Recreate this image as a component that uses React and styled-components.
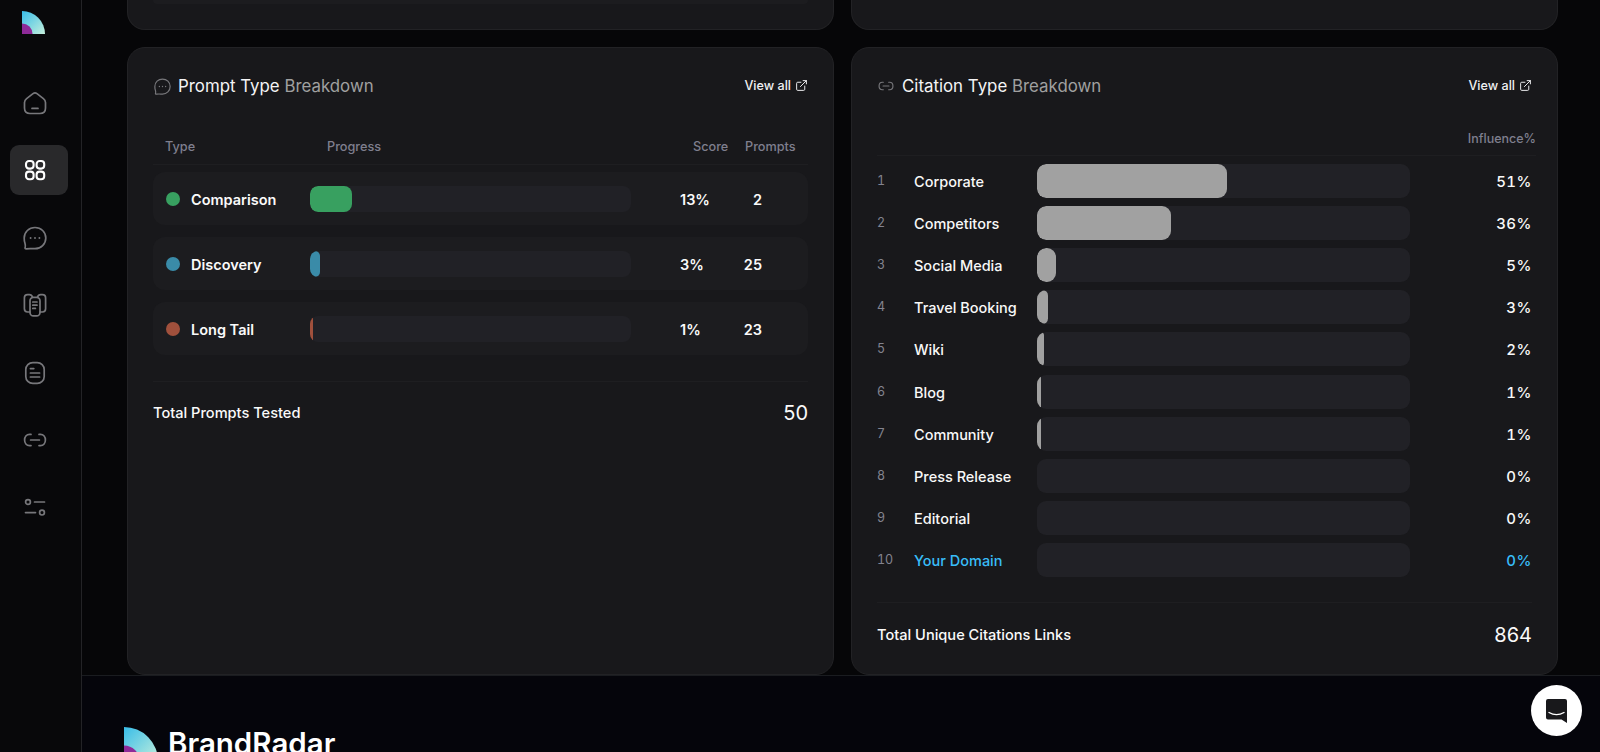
import React from 'react'
import styled, { createGlobalStyle } from 'styled-components'
import { ExternalLink } from 'lucide-react'

const promptTypes = [
  { name: 'Comparison', color: '#38a060', score: 13, prompts: 2 },
  { name: 'Discovery', color: '#3a8ba8', score: 3, prompts: 25 },
  { name: 'Long Tail', color: '#a0503c', score: 1, prompts: 23 }
]

const citationTypes = [
  { name: 'Corporate', value: 51 },
  { name: 'Competitors', value: 36 },
  { name: 'Social Media', value: 5 },
  { name: 'Travel Booking', value: 3 },
  { name: 'Wiki', value: 2 },
  { name: 'Blog', value: 1 },
  { name: 'Community', value: 1 },
  { name: 'Press Release', value: 0 },
  { name: 'Editorial', value: 0 },
  { name: 'Your Domain', value: 0, own: true }
]

const Icon = ({ size = 24, children }) => (
  <svg width={size} height={size} viewBox='0 0 24 24' fill='none' stroke='currentColor' strokeWidth='1.7' strokeLinecap='round' strokeLinejoin='round'>
    {children}
  </svg>
)

const HomeIcon = () => (
  <Icon>
    <path d='M10 2.6 Q12 1.2 14 2.6 L20.4 7.6 Q22.5 9.2 22.5 11.6 V17 Q22.5 22.5 17 22.5 H7 Q1.5 22.5 1.5 17 V11.6 Q1.5 9.2 3.6 7.6 Z' />
    <path d='M9 17.4h6' />
  </Icon>
)

const GridIcon = () => (
  <Icon>
    <g strokeWidth='2.1'>
      <rect x='3' y='3' width='7.6' height='7.6' rx='3' />
      <rect x='13.6' y='3' width='7.6' height='7.6' rx='3' />
      <rect x='3' y='13.6' width='7.6' height='7.6' rx='3' />
      <rect x='13.6' y='13.6' width='7.6' height='7.6' rx='3' />
    </g>
  </Icon>
)

const ChatIcon = ({ size }) => (
  <Icon size={size}>
    <path d='M12 1.5 C18 1.5 22.8 6 22.8 12 C22.8 18 18 22.7 12 22.7 C9.5 22.7 6 22.4 3.4 22.8 Q1.6 23 2.2 21 C2.5 19.8 2.4 18.6 2 17.4 C1.4 16 1.2 13.6 1.2 12 C1.2 6 6 1.5 12 1.5 Z' />
    <g strokeWidth='1.9'>
      <path d='M7.6 12h.01M12 12h.01M16.4 12h.01' />
    </g>
  </Icon>
)

const DocsIcon = () => (
  <Icon>
    <path d='M7 19 H4.6 Q1.4 19 1.4 15.8 V4.8 Q1.4 1.6 4.6 1.6 H6.4 Q8.6 1.6 9.6 4.2' />
    <path d='M17 19 H19.4 Q22.6 19 22.6 15.8 V4.8 Q22.6 1.6 19.4 1.6 H17.6 Q15.4 1.6 14.4 4.2' />
    <rect x='7' y='4.4' width='10' height='18.4' rx='3.4' />
    <path d='M9.8 9h4.2M9.8 12.2h4.2M9.8 15.4h2.6' />
  </Icon>
)

const ListIcon = () => (
  <Icon>
    <rect x='2.8' y='1.6' width='18.4' height='20.8' rx='7' />
    <path d='M7.4 7.6h3.4M7.4 12h9.2M7.4 16h9.2' />
  </Icon>
)

const LinkIcon = ({ size }) => (
  <Icon size={size}>
    <path d='M8 6.4 H6.6 C3.4 6.4 1.6 9 1.6 12 C1.6 15 3.4 17.6 6.6 17.6 H8' />
    <path d='M16 6.4 H17.4 C20.6 6.4 22.4 9 22.4 12 C22.4 15 20.6 17.6 17.4 17.6 H16' />
    <path d='M7.6 12h8.8' />
  </Icon>
)

const SlidersIcon = () => (
  <Icon>
    <circle cx='5' cy='7' r='2.4' />
    <path d='M11.5 7h10M2.5 17.6h10' />
    <circle cx='19' cy='17.6' r='2.4' />
  </Icon>
)

const BrandMark = ({ size }) => (
  <svg width={size} height={size} viewBox='0 0 24 24'>
    <defs>
      <linearGradient id={`mark${size}`} x1='0' y1='0' x2='1' y2='1'>
        <stop offset='0' stopColor='#38bde8' />
        <stop offset='1' stopColor='#c4efdc' />
      </linearGradient>
    </defs>
    <path d='M0 0 A24 24 0 0 1 24 24 H0 Z' fill={`url(#mark${size})`} />
    <path d='M0 13 A11 11 0 0 1 11 24 H0 Z' fill='#8e2a98' />
  </svg>
)

const PanelHeader = ({ icon, strong, light }) => (
  <Header>
    <Title>
      <TitleIcon>{icon}</TitleIcon>
      <span>{strong} <TitleLight>{light}</TitleLight></span>
    </Title>
    <ViewAll>
      View all
      <ExternalLink size={13} strokeWidth={1.8} />
    </ViewAll>
  </Header>
)

export default function App () {
  return (
    <Page>
      <GlobalStyle />
      <Sidebar>
        <SidebarLogo><BrandMark size={23} /></SidebarLogo>
        <NavList>
          <NavItem><HomeIcon /></NavItem>
          <NavItem $active><GridIcon /></NavItem>
          <NavItem><ChatIcon /></NavItem>
          <NavItem><DocsIcon /></NavItem>
          <NavItem><ListIcon /></NavItem>
          <NavItem><LinkIcon /></NavItem>
          <NavItem><SlidersIcon /></NavItem>
        </NavList>
      </Sidebar>
      <Main>
        <Content>
          <ClippedCard><ClippedStrip /></ClippedCard>
          <ClippedCard />
          <Card>
            <PanelHeader icon={<ChatIcon size={17} />} strong='Prompt Type' light='Breakdown' />
            <PromptHead>
              <span>Type</span>
              <span>Progress</span>
              <span>Score</span>
              <span>Prompts</span>
            </PromptHead>
            <PromptRows>
              {promptTypes.map(p => (
                <PromptRow key={p.name}>
                  <PromptName>
                    <Dot style={{ background: p.color }} />
                    <span>{p.name}</span>
                  </PromptName>
                  <PromptTrack>
                    <Fill style={{ width: `${p.score}%`, background: p.color }} />
                  </PromptTrack>
                  <Score>{p.score}%</Score>
                  <Count>{p.prompts}</Count>
                </PromptRow>
              ))}
            </PromptRows>
            <Total>
              <TotalLabel>Total Prompts Tested</TotalLabel>
              <TotalValue>50</TotalValue>
            </Total>
          </Card>
          <Card>
            <PanelHeader icon={<LinkIcon size={16} />} strong='Citation Type' light='Breakdown' />
            <CitationHead>Influence%</CitationHead>
            <CitationRows>
              {citationTypes.map((c, i) => (
                <CitationRow key={c.name} $own={c.own}>
                  <RowIndex>{i + 1}</RowIndex>
                  <CitationName>{c.name}</CitationName>
                  <CitationTrack>
                    <CitationFill style={{ width: `${c.value}%` }} />
                  </CitationTrack>
                  <Percent>{c.value}%</Percent>
                </CitationRow>
              ))}
            </CitationRows>
            <CitationTotal>
              <TotalLabel>Total Unique Citations Links</TotalLabel>
              <TotalValue>864</TotalValue>
            </CitationTotal>
          </Card>
        </Content>
        <Footer>
          <BrandMark size={34} />
          <BrandName>BrandRadar</BrandName>
        </Footer>
      </Main>
      <ChatBubble>
        <svg width='21' height='24' viewBox='0 0 21 24'>
          <path d='M2 0 H19 Q21 0 21 2 V24 L15.5 20.5 H2 Q0 20.5 0 18.5 V2 Q0 0 2 0 Z' fill='#18181b' />
          <path d='M3 13.5 Q10.5 17.8 18 13.5' fill='none' stroke='#fff' strokeWidth='1.4' strokeLinecap='round' />
        </svg>
      </ChatBubble>
    </Page>
  )
}

const GlobalStyle = createGlobalStyle`
  html, body {
    margin: 0;
    height: 100%;
    background: #060608;
    overflow: hidden;
  }
  * {
    box-sizing: border-box;
  }
  body {
    font-family: Inter, "Liberation Sans", sans-serif;
    color: #fafafa;
  }
`

const Page = styled.div`
  display: flex;
  height: 752px;
  overflow: hidden;
`

const Sidebar = styled.aside`
  flex: 0 0 82px;
  background: #08080a;
  border-right: 1px solid #232326;
`

const SidebarLogo = styled.div`
  height: 34px;
  padding: 11px 0 0 22px;
  line-height: 0;
`

const NavList = styled.nav`
  display: flex;
  flex-direction: column;
  gap: 17.4px;
  margin-top: 44px;
  padding: 0 13px 0 10px;
`

const NavItem = styled.div`
  display: flex;
  align-items: center;
  justify-content: center;
  height: 50px;
  padding-right: 8px;
  border-radius: 9px;
  color: ${props => props.$active ? '#ffffff' : '#77777b'};
  background: ${props => props.$active ? '#29292b' : 'transparent'};
`

const Main = styled.main`
  flex: 1;
  min-width: 0;
  background: #060608;
`

const Content = styled.div`
  display: grid;
  grid-template-columns: 707px 707px;
  grid-template-rows: 30px 628px;
  gap: 17px;
  padding: 0 42px 0 45px;
`

const Card = styled.section`
  background: #18181b;
  border: 1px solid #222225;
  border-radius: 18px;
  padding: 25px;
`

const ClippedCard = styled.div`
  background: #18181b;
  border: 1px solid #222225;
  border-top: 0;
  border-radius: 0 0 18px 18px;
  padding: 0 25px;
`

const ClippedStrip = styled.div`
  height: 4px;
  background: #1c1c1f;
  border-radius: 0 0 12px 12px;
`

const Header = styled.header`
  display: flex;
  align-items: center;
  justify-content: space-between;
  height: 26px;
`

const Title = styled.h2`
  display: flex;
  align-items: center;
  margin: 0;
  font-size: 16.85px;
  font-weight: 400;
  color: #f4f4f5;
  white-space: pre;
`

const TitleIcon = styled.span`
  display: flex;
  justify-content: center;
  width: 18px;
  margin-right: 7px;
  color: #77777b;
`

const TitleLight = styled.span`
  color: #a0a0a0;
`

const ViewAll = styled.a`
  display: flex;
  align-items: center;
  gap: 4px;
  margin-top: -2px;
  font-size: 12.6px;
  font-weight: 500;
  color: #f0f0f2;
`

const PromptHead = styled.div`
  display: grid;
  grid-template-columns: 162px 366px 52px auto;
  margin-top: 39px;
  padding: 0 0 9px 12px;
  height: 27px;
  border-bottom: 1px solid #1e1e21;
  font-size: 12.7px;
  font-weight: 500;
  line-height: 18px;
  color: #7f7f8e;
`

const PromptRows = styled.div`
  display: flex;
  flex-direction: column;
  gap: 12px;
  margin-top: 7px;
`

const PromptRow = styled.div`
  display: grid;
  grid-template-columns: 157px 321px 99px 32px;
  align-items: center;
  height: 53px;
  background: #1c1c1f;
  border-radius: 12px;
  font-size: 14.5px;
  font-weight: 600;
  line-height: 20px;
`

const PromptName = styled.div`
  display: flex;
  align-items: center;
  gap: 11px;
  padding-left: 13px;

  span:last-child {
    padding-top: 2px;
  }
`

const Dot = styled.span`
  width: 14px;
  height: 14px;
  border-radius: 50%;
`

const PromptTrack = styled.div`
  height: 26px;
  background: #212126;
  border-radius: 8px;
  overflow: hidden;
`

const Fill = styled.div`
  height: 100%;
  border-radius: 8px;
`

const Score = styled.span`
  padding: 2px 0 0 49px;
`

const Count = styled.span`
  padding-top: 2px;
  text-align: right;
`

const Total = styled.div`
  display: flex;
  align-items: center;
  justify-content: space-between;
  margin-top: 26px;
  padding-top: 19px;
  border-top: 1px solid #1e1e21;
`

const CitationTotal = styled(Total)`
  margin-top: 25px;
  padding-top: 20px;
`

const TotalLabel = styled.span`
  font-size: 14.6px;
  font-weight: 500;
  line-height: 24px;
`

const TotalValue = styled.span`
  font-size: 20px;
  font-weight: 400;
  line-height: 24px;
`

const CitationHead = styled.div`
  margin: 31px -4px 0 0;
  padding-bottom: 7px;
  border-bottom: 1px solid #1e1e21;
  font-size: 12.5px;
  font-weight: 500;
  line-height: 18px;
  text-align: right;
  color: #7f7f8e;
`

const CitationRows = styled.div`
  display: flex;
  flex-direction: column;
  gap: 8.12px;
  margin-top: 8px;
`

const CitationRow = styled.div`
  display: grid;
  grid-template-columns: 37px 123px 373px 1fr;
  align-items: center;
  height: 34px;
  font-size: 14.5px;
  font-weight: 500;
  color: ${props => props.$own ? '#38bdf8' : '#f8f8f8'};
`

const RowIndex = styled.span`
  font-size: 12.5px;
  font-weight: 400;
  font-variant-numeric: tabular-nums;
  color: #83838f;
  margin-top: -1px;
`

const CitationName = styled.span`
  padding-top: 1px;
  white-space: nowrap;
`

const CitationTrack = styled.div`
  height: 34px;
  background: #212126;
  border-radius: 9px;
  overflow: hidden;
`

const CitationFill = styled.div`
  height: 100%;
  background: #a1a1a1;
  border-radius: 9px;
`

const Percent = styled.span`
  padding-top: 1px;
  text-align: right;
  font-size: 15px;
  font-weight: 500;
  font-variant-numeric: tabular-nums;
  letter-spacing: 0.5px;
`

const Footer = styled.footer`
  display: flex;
  align-items: flex-start;
  gap: 10px;
  padding: 51px 0 0 42px;
  height: 120px;
  background: #05050b;
  border-top: 1px solid #1a1c20;
`

const BrandName = styled.div`
  font-size: 29.5px;
  font-weight: 600;
  line-height: 36px;
  margin-top: -2px;
  color: #ffffff;
`

const ChatBubble = styled.div`
  position: fixed;
  right: 18px;
  bottom: 16px;
  display: flex;
  align-items: center;
  justify-content: center;
  width: 51px;
  height: 51px;
  background: #ffffff;
  border-radius: 50%;
`
